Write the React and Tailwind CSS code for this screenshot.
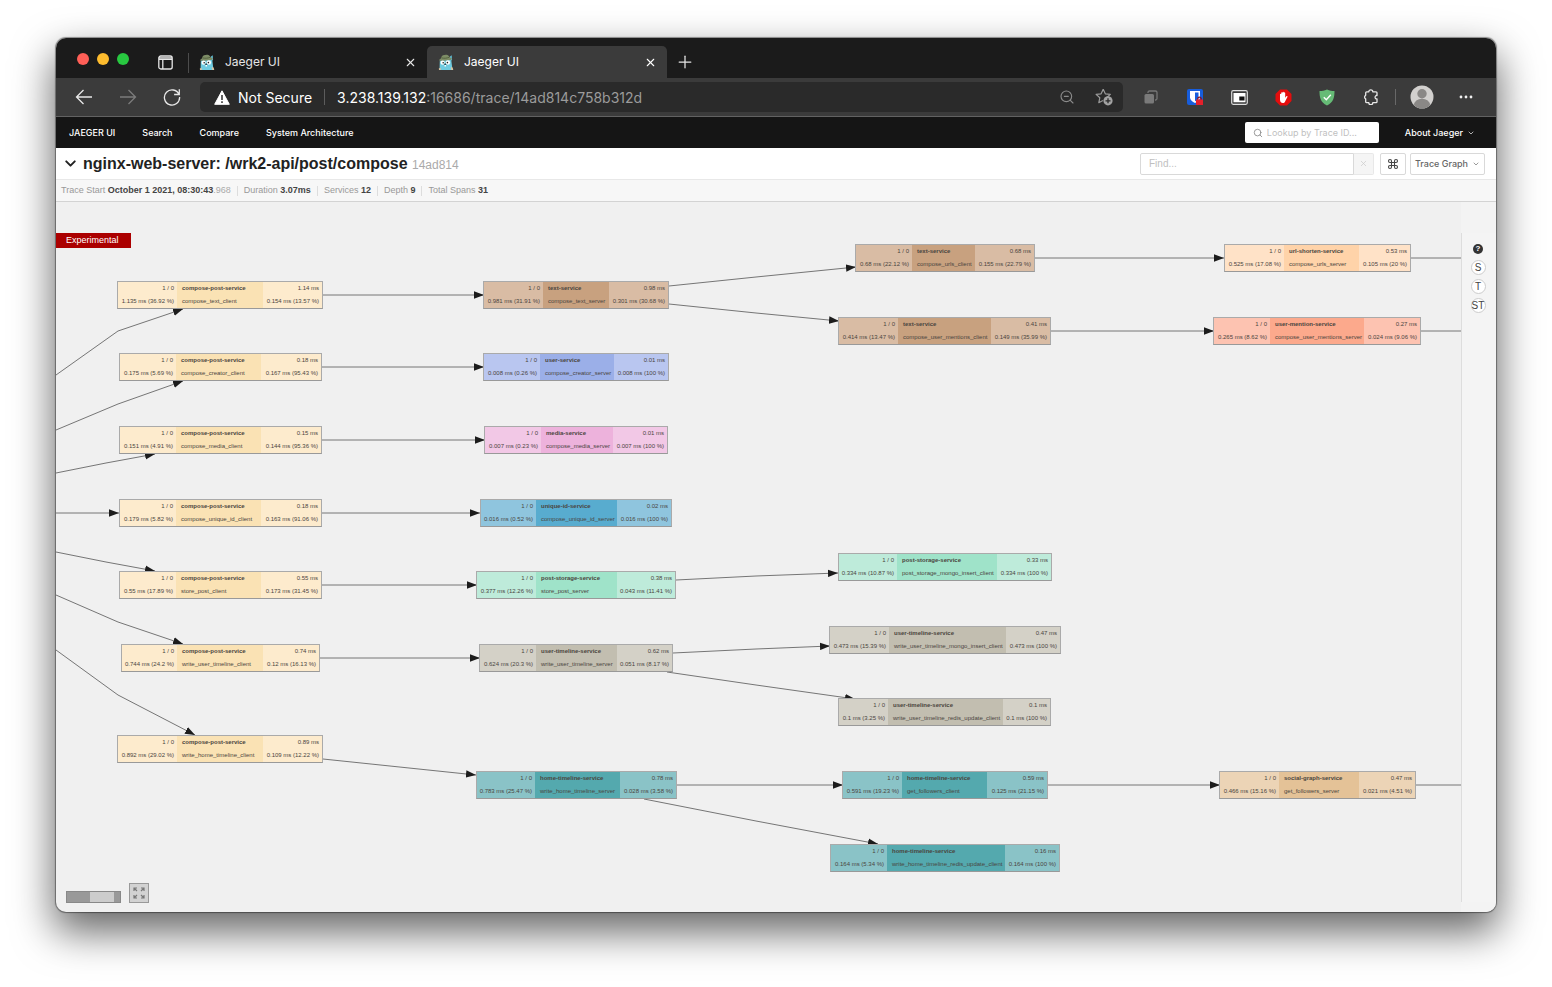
import { ChevronDown, Search, Command, X, Plus, ZoomOut } from 'lucide-react';

const C = {
  cream: ['#fdebcd', '#fae2b4'],
  brown: ['#d9bca4', '#c8a17f'],
  blue: ['#b9c6f0', '#9bafe8'],
  pink: ['#f2c8e6', '#edb2dc'],
  sky: ['#8fc5de', '#58accf'],
  mint: ['#beebda', '#9fe3c9'],
  stone: ['#d4d1c7', '#c2beb0'],
  teal: ['#8ac3c7', '#54a9ae'],
  peach: ['#ffe2c7', '#ffd3a9'],
  coral: ['#fdc3b1', '#fca98c'],
  sand: ['#ecd4b6', '#e4c297'],
};

// Column edges are left, start of middle, end of middle, right.
const nodes = [
  [[61, 121, 207, 267], 79, 'cream', 'compose-post-service', 'compose_text_client', '1.135 ms (36.92 %)', '1.14 ms', '0.154 ms (13.57 %)'],
  [[63, 120, 205, 266], 151, 'cream', 'compose-post-service', 'compose_creator_client', '0.175 ms (5.69 %)', '0.18 ms', '0.167 ms (95.43 %)'],
  [[63, 120, 205, 266], 224, 'cream', 'compose-post-service', 'compose_media_client', '0.151 ms (4.91 %)', '0.15 ms', '0.144 ms (95.36 %)'],
  [[63, 120, 205, 266], 297, 'cream', 'compose-post-service', 'compose_unique_id_client', '0.179 ms (5.82 %)', '0.18 ms', '0.163 ms (91.06 %)'],
  [[63, 120, 205, 266], 369, 'cream', 'compose-post-service', 'store_post_client', '0.55 ms (17.89 %)', '0.55 ms', '0.173 ms (31.45 %)'],
  [[65, 121, 207, 264], 442, 'cream', 'compose-post-service', 'write_user_timeline_client', '0.744 ms (24.2 %)', '0.74 ms', '0.12 ms (16.13 %)'],
  [[61, 121, 207, 267], 533, 'cream', 'compose-post-service', 'write_home_timeline_client', '0.892 ms (29.02 %)', '0.89 ms', '0.109 ms (12.22 %)'],
  [[427, 487, 553, 613], 79, 'brown', 'text-service', 'compose_text_server', '0.981 ms (31.91 %)', '0.98 ms', '0.301 ms (30.68 %)'],
  [[427, 484, 558, 613], 151, 'blue', 'user-service', 'compose_creator_server', '0.008 ms (0.26 %)', '0.01 ms', '0.008 ms (100 %)'],
  [[428, 485, 557, 612], 224, 'pink', 'media-service', 'compose_media_server', '0.007 ms (0.23 %)', '0.01 ms', '0.007 ms (100 %)'],
  [[424, 480, 561, 616], 297, 'sky', 'unique-id-service', 'compose_unique_id_server', '0.016 ms (0.52 %)', '0.02 ms', '0.016 ms (100 %)'],
  [[420, 480, 561, 620], 369, 'mint', 'post-storage-service', 'store_post_server', '0.377 ms (12.26 %)', '0.38 ms', '0.043 ms (11.41 %)'],
  [[423, 480, 561, 617], 442, 'stone', 'user-timeline-service', 'write_user_timeline_server', '0.624 ms (20.3 %)', '0.62 ms', '0.051 ms (8.17 %)'],
  [[420, 479, 564, 621], 569, 'teal', 'home-timeline-service', 'write_home_timeline_server', '0.783 ms (25.47 %)', '0.78 ms', '0.028 ms (3.58 %)'],
  [[799, 856, 919, 979], 42, 'brown', 'text-service', 'compose_urls_client', '0.68 ms (22.12 %)', '0.68 ms', '0.155 ms (22.79 %)'],
  [[782, 842, 935, 995], 115, 'brown', 'text-service', 'compose_user_mentions_client', '0.414 ms (13.47 %)', '0.41 ms', '0.149 ms (35.99 %)'],
  [[782, 841, 941, 996], 351, 'mint', 'post-storage-service', 'post_storage_mongo_insert_client', '0.334 ms (10.87 %)', '0.33 ms', '0.334 ms (100 %)'],
  [[773, 833, 950, 1005], 424, 'stone', 'user-timeline-service', 'write_user_timeline_mongo_insert_client', '0.473 ms (15.39 %)', '0.47 ms', '0.473 ms (100 %)'],
  [[782, 832, 947, 995], 496, 'stone', 'user-timeline-service', 'write_user_timeline_redis_update_client', '0.1 ms (3.25 %)', '0.1 ms', '0.1 ms (100 %)'],
  [[786, 846, 931, 992], 569, 'teal', 'home-timeline-service', 'get_followers_client', '0.591 ms (19.23 %)', '0.59 ms', '0.125 ms (21.15 %)'],
  [[774, 831, 949, 1004], 642, 'teal', 'home-timeline-service', 'write_home_timeline_redis_update_client', '0.164 ms (5.34 %)', '0.16 ms', '0.164 ms (100 %)'],
  [[1168, 1228, 1303, 1355], 42, 'peach', 'url-shorten-service', 'compose_urls_server', '0.525 ms (17.08 %)', '0.53 ms', '0.105 ms (20 %)'],
  [[1157, 1214, 1308, 1365], 115, 'coral', 'user-mention-service', 'compose_user_mentions_server', '0.265 ms (8.62 %)', '0.27 ms', '0.024 ms (9.06 %)'],
  [[1163, 1223, 1303, 1360], 569, 'sand', 'social-graph-service', 'get_followers_server', '0.466 ms (15.16 %)', '0.47 ms', '0.021 ms (4.51 %)'],
];

const edges = [
  'M0 173L62 129L127 107',
  'M0 228L62 202L127 179',
  'M0 271L50 261L99 252',
  'M0 311H63',
  'M0 350L50 360L99 369',
  'M0 393L62 420L127 442',
  'M0 448L62 493L139 533',
  'M267 93H428',
  'M266 165H428',
  'M266 238H429',
  'M266 311H424',
  'M266 383H421',
  'M264 456H424',
  'M267 557L420 573',
  'M613 84L700 75L800 65',
  'M613 102L700 111L783 119',
  'M620 378L700 374L782 371',
  'M617 451L700 447L774 444',
  'M611 470L700 483L799 497',
  'M621 583H787',
  'M588 597L700 619L822 642',
  'M979 56H1168',
  'M995 129H1158',
  'M992 583H1164',
];

const tails = ['M1355 56H1440', 'M1365 129H1440', 'M1360 583H1440'];

function Node({ data }) {
  const [[a, b, c, d], y, color, service, op, pct, time, self] = data;
  const [light, dark] = C[color];
  return (
    <div
      className="absolute grid h-7 border border-[#aaa] border-b-[#999] text-[6px] leading-[13px] whitespace-nowrap text-[#4a453f]"
      style={{ left: a, top: y, width: d - a, gridTemplateColumns: `${b - a - 1}px ${c - b}px 1fr`, backgroundColor: light }}
    >
      <div className="flex flex-col items-end pr-[3px]">
        <span>1 / 0</span>
        <span>{pct}</span>
      </div>
      <div className="flex flex-col pl-[5px]" style={{ backgroundColor: dark }}>
        <strong>{service}</strong>
        <span>{op}</span>
      </div>
      <div className="flex flex-col items-end pr-[3px]">
        <span>{time}</span>
        <span>{self}</span>
      </div>
    </div>
  );
}

function Favicon() {
  return (
    <svg viewBox="0 0 16 16" className="size-4 shrink-0" aria-hidden="true">
      <path d="M1.800 6.500L13.200 5.500L14.500 16H1.500Z" fill="#6fcbe0" />
      <path d="M11.800 2.500l2-1.300.3 5-2 .2z" fill="#5db4c9" />
      <path d="M1 6C2.500 4.800 3 4.600 3.400 3 4 .6 9.500-.2 10.800 2c.6 1 .7 1.600 2.700 2.300.8.4.2 1.300-.6 1.500-4 1-8 1.200-11.500.8z" fill="#7d8c66" />
      <path d="M3.400 3.800c2.500.8 5.200.5 7.700-.5" stroke="#56643f" strokeWidth="1" fill="none" />
      <circle cx="4.600" cy="8.700" r="2.100" fill="#fff" />
      <circle cx="9.900" cy="8.500" r="2.200" fill="#fff" />
      <circle cx="5.200" cy="8.700" r=".8" fill="#222" />
      <circle cx="9.400" cy="8.600" r=".8" fill="#222" />
      <ellipse cx="7.200" cy="10.300" rx="1.200" ry=".8" fill="#28464e" />
      <path d="M6.500 11h1.500v1.500H6.500z" fill="#fff" />
      <path d="M.8 14.500l1.800-.8.3 2.300H1zM12.800 13l1.800.6.7 2.400h-2z" fill="#d9c3a0" />
    </svg>
  );
}

function Tool({ label, children }) {
  return (
    <button aria-label={label} className="flex h-9 w-11 shrink-0 items-center justify-center">
      {children}
    </button>
  );
}

function TabStrip() {
  return (
    <div className="flex h-10 bg-[#1b1b1b] pl-[21px] text-[12px] text-[#e6e6e6]">
      <div className="flex gap-2 pt-[15px]">
        <span className="size-3 rounded-full bg-[#ff5f57]" />
        <span className="size-3 rounded-full bg-[#febc2e]" />
        <span className="size-3 rounded-full bg-[#28c840]" />
      </div>
      <button aria-label="Tab actions" className="mt-2 ml-[29px] flex h-8 items-center">
        <svg viewBox="0 0 15 15" className="size-[15px]" fill="none" stroke="#e6e6e6" strokeWidth="1.300">
          <rect x=".8" y="1" width="13.400" height="13" rx="2" />
          <path d="M1 2.800h13M1 4.300h13M4.800 4.500v9.500" />
        </svg>
      </button>
      <span className="mt-[15px] ml-[15px] h-5 w-px bg-[#4c4c4c]" />
      <div className="mt-2 flex w-[238px] items-center px-2.5">
        <Favicon />
        <a href="#tab-1" className="ml-2.5 flex-1">Jaeger UI</a>
        <button aria-label="Close first tab"><X size={13} strokeWidth={2} /></button>
      </div>
      <div className="mt-2 flex w-[240px] items-center rounded-t-[5px] bg-[#3b3b3b] pr-2.5 pl-[11px] text-white">
        <Favicon />
        <a href="#tab-2" className="ml-2.5 flex-1">Jaeger UI</a>
        <button aria-label="Close second tab"><X size={13} strokeWidth={2} /></button>
      </div>
      <button aria-label="New tab" className="mt-2 ml-2 flex items-center"><Plus size={20} strokeWidth={1.500} /></button>
    </div>
  );
}

function Toolbar() {
  return (
    <div className="flex h-[39px] items-center border-b border-[#626262] bg-[#3b3b3b] pr-2 pl-1.5 text-[#e8e8e8]">
      <Tool label="Back">
        <svg viewBox="0 0 18 16" className="h-4 w-[18px]" fill="none" stroke="currentColor" strokeWidth="1.300"><path d="M17 8H1.500M8.500 1L1.500 8l7 7" /></svg>
      </Tool>
      <Tool label="Forward">
        <svg viewBox="0 0 18 16" className="h-4 w-[18px]" fill="none" stroke="#7c7c7c" strokeWidth="1.300"><path d="M1 8h15.500M9.500 1l7 7-7 7" /></svg>
      </Tool>
      <Tool label="Reload">
        <svg viewBox="0 0 18 18" className="size-[18px]" fill="none" stroke="currentColor" strokeWidth="1.300"><path d="M16 6.500A7.600 7.600 0 1 0 16.600 9M16.300 1.200v5.300h-5.200" /></svg>
      </Tool>
      <div className="ml-1.5 flex h-[30px] flex-1 items-center rounded-[5px] bg-[#2a2a2a] pr-2.5 pl-[14px] text-[14px] whitespace-nowrap">
        <svg viewBox="0 0 16 15" className="h-[15px] w-4" aria-hidden="true">
          <path d="M8 .8L15.300 14.300H.7Z" fill="#fff" stroke="#fff" strokeLinejoin="round" />
          <path d="M8 5v5M8 11.300v1.600" stroke="#2a2a2a" strokeWidth="1.500" />
        </svg>
        <span className="ml-2 text-white">Not Secure</span>
        <span className="mx-3 h-4 w-px bg-[#5c5c5c]" />
        <div role="textbox" aria-label="Address" tabIndex={0} className="flex-1 text-[#9b9b9b]"><span className="text-white">3.238.139.132</span>:16686/trace/14ad814c758b312d</div>
        <button aria-label="Zoom out" className="mr-5 text-[#8a8a8a]"><ZoomOut size={16} strokeWidth={1.700} /></button>
        <button aria-label="Add to favorites">
          <svg viewBox="0 0 18 18" className="size-[18px]" fill="none">
            <path d="M8.200 1.300l2.100 4.500 5 .6-3.700 3.400.2 1.200M8.200 1.300L6.100 5.800l-5 .6 3.700 3.400-1 4.900 4.100-2.300" stroke="#9a9a9a" strokeWidth="1.200" strokeLinejoin="round" />
            <circle cx="13" cy="12.800" r="4.600" fill="#a3a3a3" />
            <path d="M13 10.300v5M10.500 12.800h5" stroke="#2a2a2a" strokeWidth="1.300" />
          </svg>
        </button>
      </div>
      <div className="flex pl-1.5">
        <Tool label="Collections">
          <svg viewBox="0 0 14 14" className="size-3.5"><path d="M4 3V2.500Q4 1 5.500 1h6Q13 1 13 2.500v6q0 1.500-1.500 1.500H11" fill="none" stroke="#777" strokeWidth="1.300" /><rect x=".5" y="4" width="9.500" height="9.500" rx="1.500" fill="#7a7a7a" /></svg>
        </Tool>
        <Tool label="Password manager">
          <svg viewBox="0 0 17 17" className="size-[17px]">
            <rect width="16" height="16" rx="2" fill="#175ddc" />
            <path d="M3 2h10v6.500c0 2.500-2.500 4.300-5 5.500-2.500-1.200-5-3-5-5.500z" fill="#fff" /><path d="M8 3.500h3.500v5c0 1.500-1.700 2.800-3.500 3.700z" fill="#175ddc" />
            <path d="M10.800 11V9.800a1.700 1.700 0 0 1 3.400 0V11" fill="none" stroke="#8e1219" strokeWidth="1.300" /><rect x="9" y="10.500" width="7" height="5.500" rx=".5" fill="#e5202b" />
          </svg>
        </Tool>
        <Tool label="Picture in picture">
          <svg viewBox="0 0 17 15" className="h-[15px] w-[17px]"><rect x=".7" y=".7" width="15.600" height="13.600" rx="1.500" fill="#3b3b3b" stroke="#ddd" strokeWidth="1.200" /><path d="M2.500 3h12v9.300h-12z" fill="#fff" /><path d="M8.300 6.500h5.200v4H8.300z" fill="#111" /></svg>
        </Tool>
        <Tool label="Ad blocker">
          <svg viewBox="0 0 17 17" className="size-[17px]"><path d="M5 .5h7L16.500 5v7L12 16.500H5L.5 12V5z" fill="#e40d0d" /><path d="M5 8.500V5.300c0-.9 1.200-.9 1.200 0V4c0-.9 1.300-.9 1.300 0v-.6c0-.9 1.400-.9 1.400 0V4c0-.9 1.300-.9 1.300 0v4.700l1-1.300c.6-.7 1.600-.3 1.200.5l-2.300 4.600c-.5 1-1.200 1.500-2.300 1.500C6 14 5 12.500 5 10.500z" fill="#fff" /></svg>
        </Tool>
        <Tool label="Privacy shield">
          <svg viewBox="0 0 16 17" className="h-[17px] w-4"><path d="M8 .5c2.500 1.300 5 1.500 7.500 1.500 0 6-1 11.500-7.500 14.500C1.500 13.500.5 8 .5 2 3 2 5.500 1.800 8 .5z" fill="#66bb76" /><path d="M4.800 8.300l2.500 2.500 4.500-5" fill="none" stroke="#fff" strokeWidth="1.400" /></svg>
        </Tool>
        <Tool label="Extensions">
          <svg viewBox="0 0 16 16" className="size-4" fill="none" stroke="#e8e8e8" strokeWidth="1.300" strokeLinejoin="round"><path d="M5.800 2.800a2 2 0 0 1 4 0H13q1 0 1 1v2.700h-.9a1.900 1.900 0 0 0 0 3.400H14v2.800q0 1-1 1H9.800a2 2 0 0 1-4 0H3.700q-1 0-1-1V9.900a2 2 0 0 1 0-3.600V3.800q0-1 1-1z" /></svg>
        </Tool>
      </div>
      <span className="mr-1 ml-0.5 h-4 w-px bg-[#686868]" />
      <Tool label="Profile">
        <svg viewBox="0 0 24 24" className="size-6"><circle cx="12" cy="12" r="11.500" fill="#d2d0ce" /><circle cx="12" cy="8.800" r="4.700" fill="#8a8886" /><path d="M4 20.200a8 6.500 0 0 1 16 0A11.500 11.500 0 0 1 4 20.200z" fill="#8a8886" /></svg>
      </Tool>
      <Tool label="More">
        <svg viewBox="0 0 14 4" className="h-1 w-3.5" fill="#f0f0f0"><circle cx="2" cy="2" r="1.400" /><circle cx="7" cy="2" r="1.400" /><circle cx="12" cy="2" r="1.400" /></svg>
      </Tool>
    </div>
  );
}

function Nav() {
  return (
    <nav className="flex h-[31px] items-center bg-[#151515] pr-[21px] pl-[13px] text-[9px] font-medium whitespace-nowrap text-white">
      <div className="flex flex-1 gap-[27px]">
        <a href="#home">JAEGER UI</a>
        <a href="#search">Search</a>
        <a href="#compare">Compare</a>
        <a href="#architecture">System Architecture</a>
      </div>
      <label className="mr-[26px] flex h-[21px] w-[134px] items-center gap-1 rounded-[2px] bg-white pl-2">
        <Search size={10} strokeWidth={2} className="shrink-0 text-[#888]" />
        <input aria-label="Lookup by Trace ID" placeholder="Lookup by Trace ID..." className="w-full font-normal text-black outline-none placeholder:text-[#bfbfbf]" />
      </label>
      <button className="flex items-center gap-1">About Jaeger <ChevronDown size={8} strokeWidth={2} /></button>
    </nav>
  );
}

function Meta({ label, value, suffix, last }) {
  return (
    <li className={last ? 'flex' : 'flex after:mx-[6px] after:h-2.5 after:w-px after:self-center after:bg-[#ddd]'}>
      <span className="text-[#999]">{label}&nbsp;</span>
      <strong className="text-[#444]">{value}</strong>
      {suffix && <span className="text-[#aaa]">{suffix}</span>}
    </li>
  );
}

function TraceHeader() {
  return (
    <header className="bg-white font-['Liberation_Sans',Arial,sans-serif]">
      <div className="flex h-8 items-center border-b border-[#e8e8e8] pr-[11px] pl-1.5 text-[10px]">
        <button aria-label="Collapse header"><ChevronDown size={17} strokeWidth={2.800} className="text-[#222]" /></button>
        <h1 className="ml-1 flex-1 text-[16px] font-bold whitespace-nowrap text-[#222]">
          nginx-web-server: /wrk2-api/post/compose <small className="text-[12px] font-normal text-[#aaa]">14ad814</small>
        </h1>
        <input aria-label="Find" placeholder="Find..." className="h-[22px] w-[214px] rounded-l-[2px] border border-[#d9d9d9] px-2 outline-none placeholder:text-[#bfbfbf]" />
        <button aria-label="Clear find" className="flex h-[22px] w-5 items-center justify-center rounded-r-[2px] border border-l-0 border-[#e8e8e8] bg-[#f5f5f5] text-[#ccc]"><X size={9} /></button>
        <button aria-label="Keyboard shortcuts" className="ml-1.5 flex h-[22px] w-[26px] items-center justify-center rounded-[2px] border border-[#d9d9d9] text-[#444]"><Command size={12} strokeWidth={2.200} /></button>
        <button className="ml-1 flex h-[22px] w-[75px] items-center justify-center gap-1 rounded-[2px] border border-[#d9d9d9] font-['Inter',sans-serif] text-[9px] font-medium whitespace-nowrap text-[#666]">Trace Graph <ChevronDown size={8} strokeWidth={2} className="shrink-0" /></button>
      </div>
      <ul className="flex h-[22px] items-center border-b border-[#d3d3d3] bg-[#f7f7f7] pl-[5px] text-[9px] whitespace-nowrap">
        <Meta label="Trace Start" value="October 1 2021, 08:30:43" suffix=".968" />
        <Meta label="Duration" value="3.07ms" />
        <Meta label="Services" value="12" />
        <Meta label="Depth" value="9" />
        <Meta label="Total Spans" value="31" last />
      </ul>
    </header>
  );
}

export default function App() {
  return (
    <div className="flex min-h-screen flex-col bg-white px-14 pt-[38px] pb-[75px] font-['Inter',sans-serif]">
      <div className="flex flex-1 flex-col overflow-hidden rounded-[10px] bg-[#f0f0f0] shadow-[0_0_1px_1px_rgba(0,0,0,0.4),0_18px_40px_2px_rgba(0,0,0,0.6)]">
        <TabStrip />
        <Toolbar />
        <Nav />
        <TraceHeader />
        <main className="relative min-h-[710px] flex-1 overflow-hidden font-['Liberation_Sans',Arial,sans-serif]">
          <svg className="absolute inset-0 size-full" aria-hidden="true">
            <defs>
              <marker id="arrow" markerUnits="userSpaceOnUse" markerWidth="10" markerHeight="8" refX="10" refY="4" orient="auto">
                <path d="M0 0.300L10 4L0 7.700Z" fill="#1c1c1c" />
              </marker>
            </defs>
            <g fill="none" stroke="#555" strokeWidth="0.800">
              {edges.map((d) => <path key={d} d={d} markerEnd="url(#arrow)" />)}
              {tails.map((d) => <path key={d} d={d} />)}
            </g>
          </svg>
          {nodes.map((n) => <Node key={n[4]} data={n} />)}
          <span className="absolute top-[31px] left-0 bg-[#ab0000] pr-3 pl-2.5 text-[9px] leading-[15px] text-white">Experimental</span>
          <div className="absolute bottom-[9px] left-2.5 flex items-end gap-2">
            <div className="flex h-3 w-[55px] border border-[#888] bg-[#999] pl-[23px]"><span className="w-6 bg-[#ccc]" /></div>
            <button aria-label="Fit graph" className="flex size-5 items-center justify-center border border-[#999] bg-[#d2d2d2]">
              <svg viewBox="0 0 14 14" className="size-3.5" fill="none" stroke="#777" strokeWidth="1.200"><path d="M2 5V2h3M2 2l3 3M9 2h3v3M12 2L9 5M2 9v3h3M2 12l3-3M12 9v3H9M12 12L9 9" /></svg>
            </button>
          </div>
          <aside className="absolute inset-y-0 right-0 w-[35px] bg-[#f3f3f3] pt-[31px] pb-2.5">
            <div className="flex h-full flex-col items-center gap-1 border-l border-[#ddd] bg-[#f4f4f4] pt-[11px] pr-0.5 text-[10px] text-[#444]">
              <button aria-label="Help" className="mb-0.5 flex size-[10px] items-center justify-center rounded-full bg-[#333] text-[8px] font-bold text-white">?</button>
              {['S', 'T', 'ST'].map((t) => (
                <button key={t} className="flex size-[15px] items-center justify-center rounded-full border border-[#ccc] bg-white">{t}</button>
              ))}
            </div>
          </aside>
        </main>
      </div>
    </div>
  );
}
